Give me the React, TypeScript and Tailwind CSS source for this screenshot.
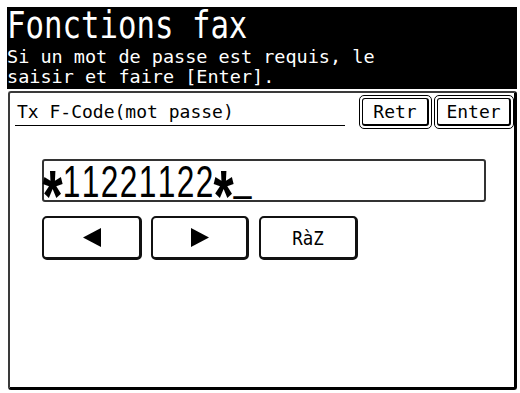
import React from 'react';

const mono = "font-['DejaVu_Sans_Mono',monospace]";

const code = ['*', '1', '1', '2', '2', '1', '1', '2', '2', '*', '_'];

const CharCell: React.FC<{ ch: string }> = ({ ch }) => {
  let size = 'text-[44px] leading-[39px]';
  if (ch === '*') size = 'text-[72px] leading-[68px] font-bold';
  if (ch === '_') size = 'text-[44px] leading-[25px]';
  return (
    <span className={`flex h-[39px] w-[19px] shrink-0 justify-center scale-x-[0.72] ${size}`}>
      {ch}
    </span>
  );
};

const FrameButton: React.FC<{ label: string; width: string }> = ({ label, width }) => (
  <div className={`${width} h-[34px] rounded-[5px] border border-black p-[2px]`}>
    <div
      className={`flex h-full items-center justify-center rounded-[3px] border border-r-2 border-b-2 border-black text-[18px] leading-none text-black ${mono}`}
    >
      {label}
    </div>
  </div>
);

const KeyButton: React.FC<{ width: string; children: React.ReactNode }> = ({ width, children }) => (
  <div
    className={`${width} flex h-[44px] items-center justify-center rounded-[5px] border-2 border-r-[3px] border-b-[3px] border-[#111]`}
  >
    {children}
  </div>
);

export default function App() {
  return (
    <div className="flex h-[393px] w-[520px] flex-col bg-white pt-[7px] pr-[3px] pb-[3px] pl-[7px]">
      {/* header */}
      <div className={`h-[82px] bg-black text-white ${mono}`}>
        <div className="h-[38px]">
          <span className="inline-block origin-left scale-x-[0.83] text-[37px] leading-[38px]">
            Fonctions fax
          </span>
        </div>
        <div className="mt-[2px] text-[18.5px] leading-[20px] whitespace-pre">
          <div>Si un mot de passe est requis, le</div>
          <div>saisir et faire [Enter].</div>
        </div>
      </div>

      {/* panel */}
      <div className="mt-[2px] ml-[1px] flex flex-1 flex-col rounded-[3px] border-t-2 border-r-[3px] border-b-[3px] border-l-2 border-t-[#3a3a3a] border-r-black border-b-black border-l-[#3a3a3a]">
        <div className="flex items-start pt-[2px] pl-[5px]">
          <div className={`h-[31px] w-[330px] border-b border-black pt-[7px] pl-[2px] text-[18px] leading-[20px] text-black ${mono}`}>
            Tx F-Code(mot passe)
          </div>
          <div className="ml-auto flex gap-[2px]">
            <FrameButton label="Retr" width="w-[73px]" />
            <FrameButton label="Enter" width="w-[80px]" />
          </div>
        </div>

        <div className="mt-[30px] ml-[32px] h-[43px] w-[444px] rounded-[3px] border-2 border-[#333]">
          <div className="-ml-[1px] flex pt-[1px] font-['Liberation_Sans',sans-serif] text-black">
            {code.map((ch, i) => (
              <CharCell key={i} ch={ch} />
            ))}
          </div>
        </div>

        <div className="mt-[14px] ml-[32px] flex">
          <KeyButton width="w-[100px]">
            <svg width="18" height="19" viewBox="0 0 18 19">
              <polygon points="0,9.5 18,0 18,19" fill="#000" />
            </svg>
          </KeyButton>
          <div className="ml-[9px]">
            <KeyButton width="w-[98px]">
              <svg width="18" height="19" viewBox="0 0 18 19">
                <polygon points="0,0 0,19 18,9.5" fill="#000" />
              </svg>
            </KeyButton>
          </div>
          <div className="ml-[10px]">
            <KeyButton width="w-[99px]">
              <span className={`inline-block scale-x-[0.87] text-[20px] leading-none text-black ${mono}`}>
                RàZ
              </span>
            </KeyButton>
          </div>
        </div>
      </div>
    </div>
  );
}
